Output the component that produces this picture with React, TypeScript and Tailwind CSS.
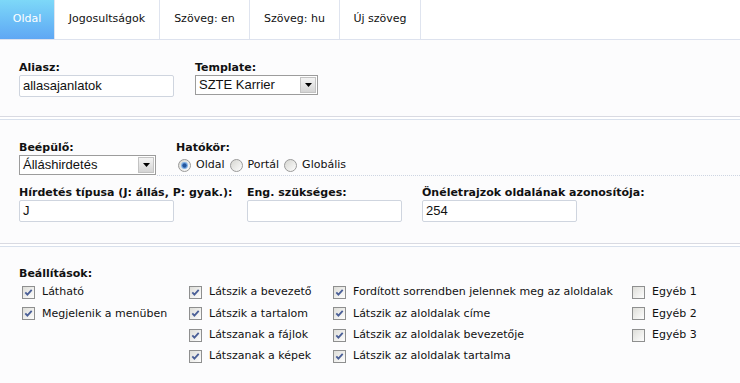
import { useId } from 'react';

const TABS = [
  { label: 'Oldal', width: 'w-[55px]', active: true },
  { label: 'Jogosultságok', width: 'w-[105px]', active: false },
  { label: 'Szöveg: en', width: 'w-[90px]', active: false },
  { label: 'Szöveg: hu', width: 'w-[90px]', active: false },
  { label: 'Új szöveg', width: 'w-[81px]', active: false },
];

const SETTINGS: { label: string; checked: boolean }[][] = [
  [
    { label: 'Látható', checked: true },
    { label: 'Megjelenik a menüben', checked: true },
  ],
  [
    { label: 'Látszik a bevezető', checked: true },
    { label: 'Látszik a tartalom', checked: true },
    { label: 'Látszanak a fájlok', checked: true },
    { label: 'Látszanak a képek', checked: true },
  ],
  [
    { label: 'Fordított sorrendben jelennek meg az aloldalak', checked: true },
    { label: 'Látszik az aloldalak címe', checked: true },
    { label: 'Látszik az aloldalak bevezetője', checked: true },
    { label: 'Látszik az aloldalak tartalma', checked: true },
  ],
  [
    { label: 'Egyéb 1', checked: false },
    { label: 'Egyéb 2', checked: false },
    { label: 'Egyéb 3', checked: false },
  ],
];

const COL_WIDTHS = ['w-[167px]', 'w-[144px]', 'w-[299px]', 'flex-1'];

const tahoma = "font-['DejaVu_Sans',sans-serif]";
const arial = "font-['Liberation_Sans',Arial,sans-serif]";

function Checkbox({ checked }: { checked: boolean }) {
  const id = useId();
  return (
    <svg width="13" height="13" viewBox="0 0 13 13" className="shrink-0">
      <defs>
        <linearGradient id={id} x1="0" y1="0" x2="1" y2="1">
          <stop offset="0" stopColor="#dcdcd7" />
          <stop offset="1" stopColor="#ffffff" />
        </linearGradient>
      </defs>
      <rect x="0.5" y="0.5" width="12" height="12" fill={`url(#${id})`} stroke="#8e8f8f" />
      {checked && (
        <path d="M3.3 6.3 L5.4 8.6 L9.7 3.9" fill="none" stroke="#4a5f97" strokeWidth="1.8" />
      )}
    </svg>
  );
}

function Radio({ checked }: { checked: boolean }) {
  const id = useId();
  return (
    <svg width="13" height="13" viewBox="0 0 13 13" className="shrink-0">
      <defs>
        <linearGradient id={id} x1="0" y1="0" x2="1" y2="1">
          <stop offset="0" stopColor="#d4d4cf" />
          <stop offset="1" stopColor="#ffffff" />
        </linearGradient>
      </defs>
      <circle cx="6.5" cy="6.5" r="6" fill={`url(#${id})`} stroke="#9a9a9a" />
      {checked && (
        <>
          <circle cx="6.5" cy="6.5" r="3.4" fill="#7fb0e6" />
          <circle cx="6.5" cy="6.5" r="2.2" fill="#24569e" />
        </>
      )}
    </svg>
  );
}

function Select({ value, width }: { value: string; width: string }) {
  return (
    <div className={`flex h-[20px] ${width} items-stretch border border-[#9c9c9c] bg-white`}>
      <span className={`flex-1 pl-[3px] text-[13px] leading-[18px] text-[#111] ${arial}`}>{value}</span>
      <span className="m-px flex w-[16px] items-center justify-center border border-[#c3c3c3] bg-gradient-to-b from-[#f4f4f4] to-[#d4d4d4]">
        <svg width="7" height="4" viewBox="0 0 7 4">
          <path d="M0 0 H7 L3.5 4 Z" fill="#000" />
        </svg>
      </span>
    </div>
  );
}

function TextInput({ value }: { value: string }) {
  return (
    <div
      className={`h-[22px] w-[155px] rounded-[2px] border border-[#cfd5df] bg-white pl-[3px] text-[13px] leading-[20px] text-[#111] ${arial}`}
    >
      {value}
    </div>
  );
}

function Label({ children }: { children: string }) {
  return <div className={`h-[14px] text-[11px] font-bold leading-[14px] text-[#111] ${tahoma}`}>{children}</div>;
}

export default function App() {
  return (
    <div className={`flex h-[383px] w-[740px] flex-col overflow-hidden bg-white ${tahoma}`}>
      {/* Tabs */}
      <div className="flex h-[40px] shrink-0 border-b border-[#dde2ee] bg-white">
        {TABS.map((tab) => (
          <div
            key={tab.label}
            className={`flex ${tab.width} items-center justify-center border-r border-[#dfe4ef] text-[11px] ${
              tab.active
                ? 'bg-gradient-to-b from-[#7dd8f8] to-[#5fa7f4] text-white'
                : 'text-[#111]'
            }`}
          >
            {tab.label}
          </div>
        ))}
      </div>

      {/* Aliasz / Template */}
      <div className="flex h-[77px] shrink-0 gap-[21px] border-b border-[#d9dae2] bg-[#fcfcfd] pt-[21px] pl-[19px]">
        <div>
          <Label>Aliasz:</Label>
          <TextInput value="allasajanlatok" />
        </div>
        <div>
          <Label>Template:</Label>
          <Select value="SZTE Karrier" width="w-[123px]" />
        </div>
      </div>

      {/* Beépülő / Hatókör / fields */}
      <div className="mt-[2px] flex h-[125px] shrink-0 flex-col border-y border-t-[#d8e0ec] border-b-[#d9dae2] bg-[#fcfcfd] pt-[21px] pl-[19px]">
        <div className="flex">
          <div className="w-[138px]">
            <Label>Beépülő:</Label>
            <Select value="Álláshirdetés" width="w-[137px]" />
          </div>
          <div className="flex-1 border-b border-dotted border-[#cdd5e2] pl-[19px]">
            <Label>Hatókör:</Label>
            <div className="flex h-[20px] items-center pl-[2px] text-[11px] text-[#111]">
              <Radio checked />
              <span className="mr-[5px] ml-[5px]">Oldal</span>
              <Radio checked={false} />
              <span className="mr-[5px] ml-[5px]">Portál</span>
              <Radio checked={false} />
              <span className="ml-[5px]">Globális</span>
            </div>
          </div>
        </div>
        <div className="mt-[10px] flex">
          <div className="w-[228px]">
            <Label>Hírdetés típusa (J: állás, P: gyak.):</Label>
            <TextInput value="J" />
          </div>
          <div className="w-[175px]">
            <Label>Eng. szükséges:</Label>
            <TextInput value="" />
          </div>
          <div>
            <Label>Önéletrajzok oldalának azonosítója:</Label>
            <TextInput value="254" />
          </div>
        </div>
      </div>

      {/* Beállítások */}
      <div className="mt-[2px] flex-1 border-t border-[#d8e0ec] bg-[#fcfcfd] pt-[20px] pl-[19px]">
        <Label>Beállítások:</Label>
        <div className="mt-px flex">
          {SETTINGS.map((col, i) => (
            <div key={i} className={`flex flex-col ${COL_WIDTHS[i]}`}>
              {col.map((item) => (
                <div key={item.label} className="flex h-[21.3px] items-center pl-[3px]">
                  <Checkbox checked={item.checked} />
                  <span className="ml-[7px] text-[11px] whitespace-nowrap text-[#111]">{item.label}</span>
                </div>
              ))}
            </div>
          ))}
        </div>
      </div>
    </div>
  );
}
